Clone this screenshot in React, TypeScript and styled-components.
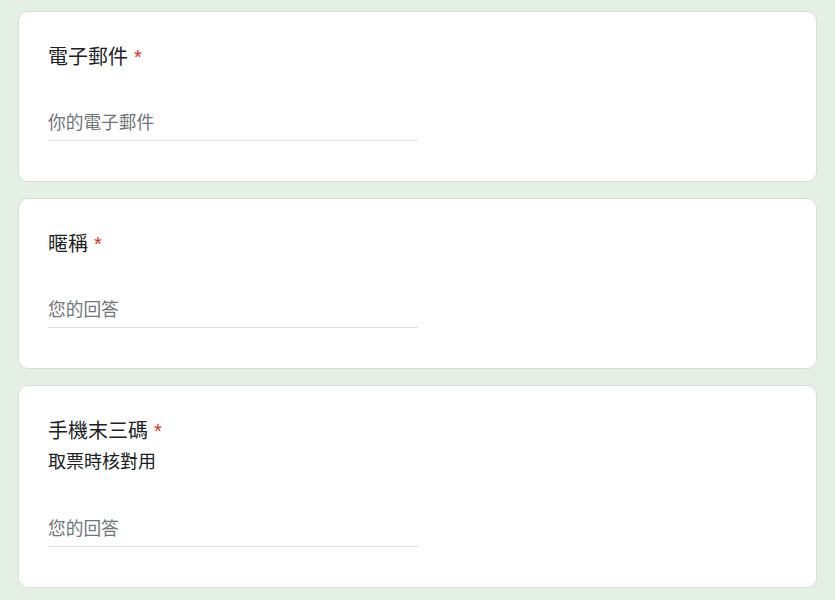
import React from "react";
import styled, { createGlobalStyle } from "styled-components";

const GlobalStyle = createGlobalStyle`
  html, body {
    margin: 0;
    padding: 0;
    background: #e3f0e3;
  }
  body {
    font-family: "Liberation Sans", "Noto Sans CJK TC", sans-serif;
    color: #202124;
  }
`;

const Page = styled.main`
  display: flex;
  flex-direction: column;
  gap: 16px;
  padding: 11px 18px 12px;
  min-height: 600px;
  box-sizing: border-box;
  background: #e3f0e3;
`;

const Card = styled.section`
  background: #ffffff;
  border: 1px solid #dadce0;
  border-radius: 10px;
  padding: 30px 29px 40px;
  display: flex;
  flex-direction: column;
`;

const Title = styled.div`
  font-family: "Liberation Sans", "Noto Sans CJK TC", sans-serif;
  font-size: 20px;
  line-height: 30px;
  color: #202124;
`;

const Required = styled.span`
  color: #d93025;
  margin-left: 6px;
`;

const Description = styled.div`
  font-family: "Liberation Sans", "Noto Sans CJK TC", sans-serif;
  font-size: 18px;
  line-height: 25px;
  margin-top: 4px;
  margin-bottom: 3px;
  color: #202124;
`;

const Field = styled.div`
  width: 50%;
  margin-top: 36px;
  padding-bottom: 2px;
  border-bottom: 1px solid #e0e0e0;
`;

const Input = styled.input`
  display: block;
  width: 100%;
  box-sizing: border-box;
  border: none;
  outline: none;
  padding: 0;
  margin: 0;
  height: 30px;
  line-height: 30px;
  background: transparent;
  font-family: "Liberation Sans", "Noto Sans CJK TC", sans-serif;
  font-size: 17.7px;
  color: #202124;
  &::placeholder {
    color: #70757a;
    opacity: 1;
  }
`;

type Q = { title: string; desc?: string; placeholder: string };

const questions: Q[] = [
  { title: "電子郵件", placeholder: "你的電子郵件" },
  { title: "暱稱", placeholder: "您的回答" },
  { title: "手機末三碼", desc: "取票時核對用", placeholder: "您的回答" },
];

export default function App() {
  return (
    <>
      <GlobalStyle />
      <Page>
        {questions.map((q) => (
          <Card key={q.title}>
            <Title>
              {q.title}
              <Required>*</Required>
            </Title>
            {q.desc && <Description>{q.desc}</Description>}
            <Field>
              <Input placeholder={q.placeholder} />
            </Field>
          </Card>
        ))}
      </Page>
    </>
  );
}
